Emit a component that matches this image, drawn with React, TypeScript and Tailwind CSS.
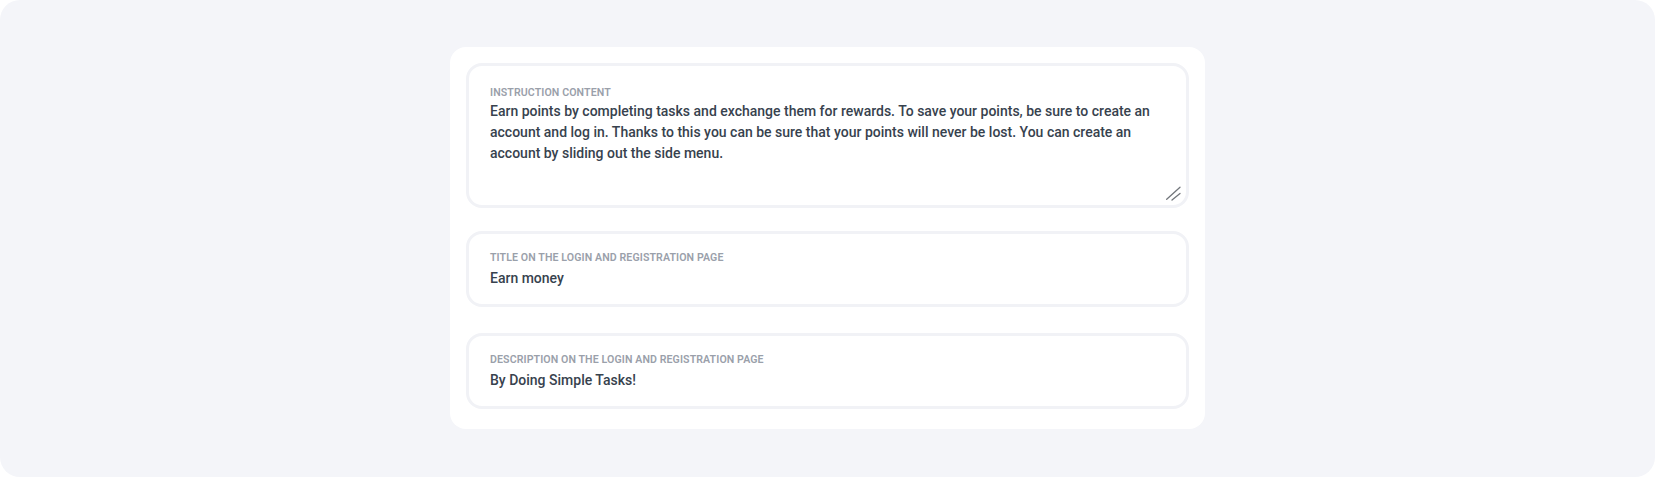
import React from "react";

const font = { fontFamily: "Roboto, 'Noto Sans', sans-serif" };

function Label({ children }: { children: React.ReactNode }) {
  return (
    <div className="text-[10.6px] leading-4 font-semibold uppercase tracking-[0.1px] text-[#9aa0aa]">{children}</div>
  );
}

function Field({ label, value, className = "" }: { label: string; value: string; className?: string }) {
  return (
    <div className={"rounded-[16px] border-[3px] border-[#f1f2f6] bg-white pt-4 pb-[15px] px-[21px] " + className}>
      <Label>{label}</Label>
      <input
        readOnly
        value={value}
        className="mt-[2px] block w-full h-[21px] p-0 border-0 outline-none bg-transparent text-[14px] leading-[21px] font-medium text-[#37424e]"
        style={font}
      />
    </div>
  );
}

export default function App() {
  return (
    <div className="w-full h-[477px] bg-[#f4f5f9] rounded-[20px] flex justify-center pt-[47px]" style={font}>
      <div className="w-[755px] self-start bg-white rounded-[16px] pt-4 pb-5 px-4 flex flex-col">
        <div className="relative rounded-[16px] border-[3px] border-[#f1f2f6] bg-white pt-[19px] pl-[21px] pr-[3px] pb-[3px]">
          <Label>Instruction content</Label>
          <textarea
            readOnly
            className="block w-full h-[101px] p-0 m-0 border-0 outline-none bg-transparent resize-none text-[14px] leading-[21px] font-medium text-[#37424e]"
            style={font}
            defaultValue="Earn points by completing tasks and exchange them for rewards. To save your points, be sure to create an account and log in. Thanks to this you can be sure that your points will never be lost. You can create an account by sliding out the side menu."
          />
          <svg
            className="absolute right-[5px] bottom-[4px] w-4 h-4"
            viewBox="0 0 16 16"
            fill="none"
            stroke="#72767b"
            strokeWidth="1.3"
            strokeLinecap="round"
          >
            <path d="M1.7 14.3 L15 2.3" />
            <path d="M7 15 L15 8.5" />
          </svg>
        </div>
        <Field className="mt-[23px]" label="Title on the login and registration page" value="Earn money" />
        <Field className="mt-[26px]" label="Description on the login and registration page" value="By Doing Simple Tasks!" />
      </div>
    </div>
  );
}
